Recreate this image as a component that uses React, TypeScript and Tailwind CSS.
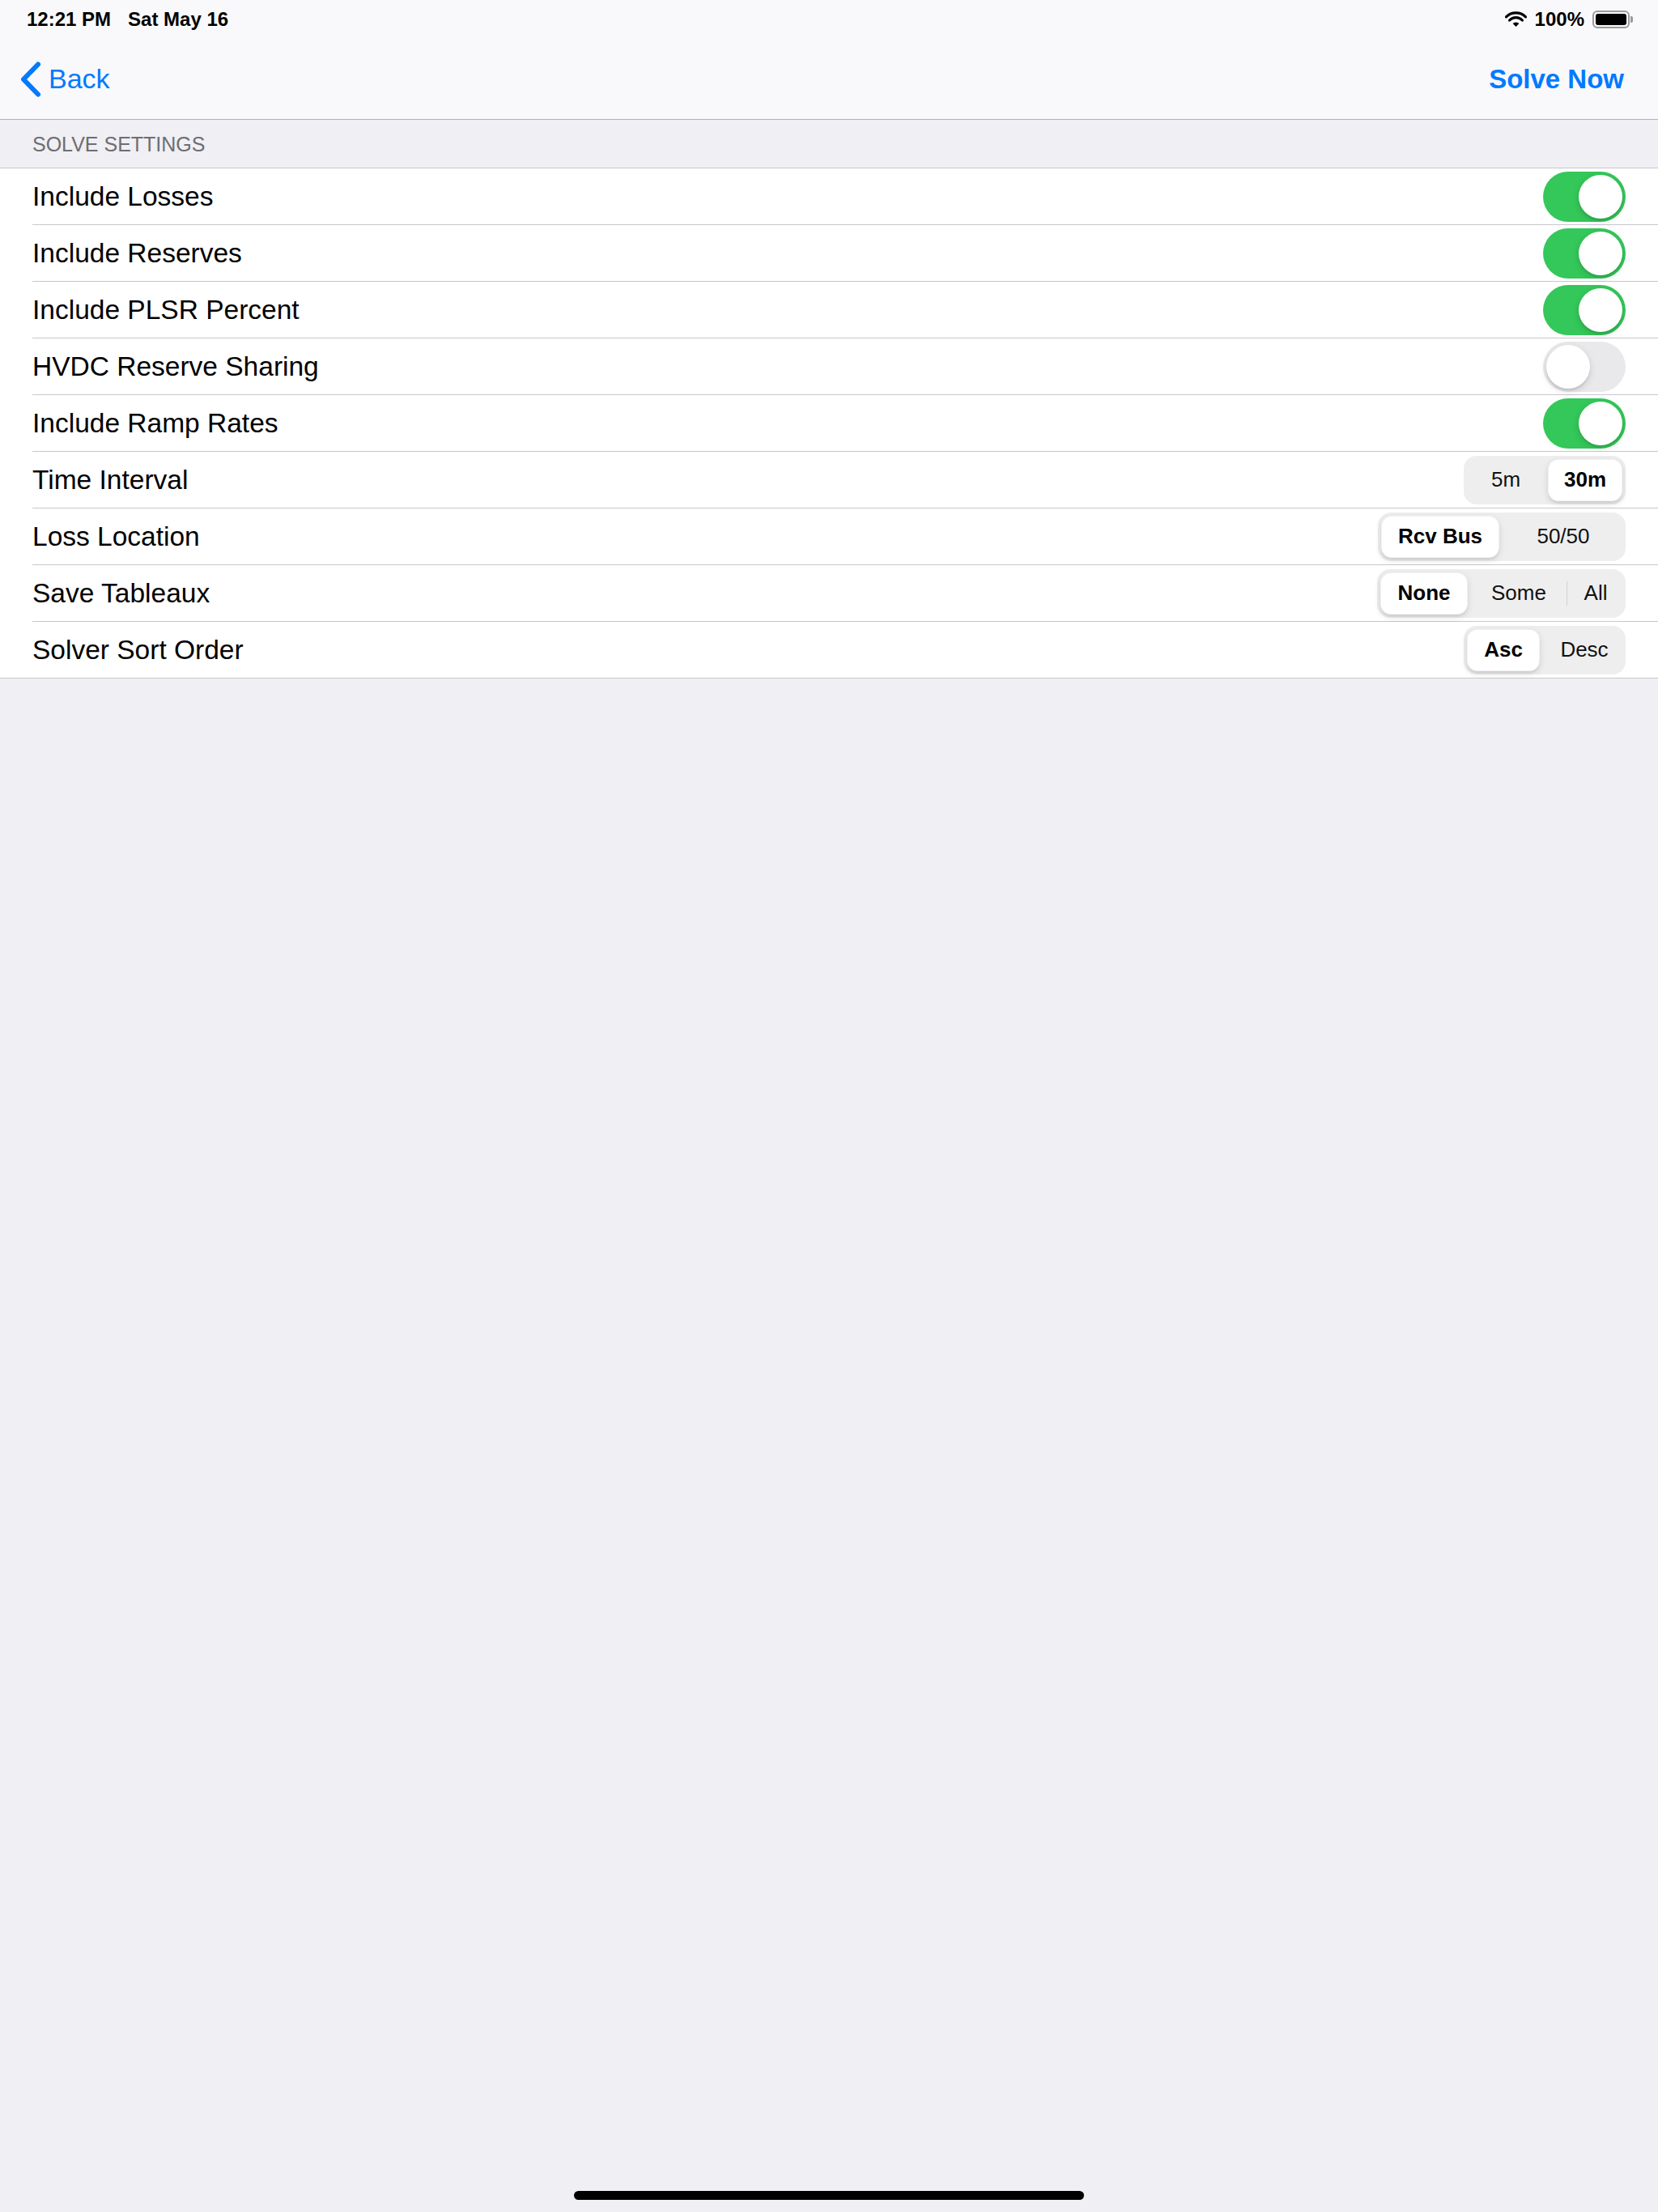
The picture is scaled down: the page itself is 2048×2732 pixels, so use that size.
import React from 'react';

type Segment = { label: string; width: string; selected?: boolean; divider?: boolean };

interface SettingRow {
  label: string;
  kind: 'toggle' | 'segment';
  on?: boolean;
  segments?: Segment[];
}

const rows: SettingRow[] = [
  { label: 'Include Losses', kind: 'toggle', on: true },
  { label: 'Include Reserves', kind: 'toggle', on: true },
  { label: 'Include PLSR Percent', kind: 'toggle', on: true },
  { label: 'HVDC Reserve Sharing', kind: 'toggle', on: false },
  { label: 'Include Ramp Rates', kind: 'toggle', on: true },
  {
    label: 'Time Interval',
    kind: 'segment',
    segments: [
      { label: '5m', width: 'w-[100px] pr-[4px]' },
      { label: '30m', width: 'w-[92px]', selected: true },
    ],
  },
  {
    label: 'Loss Location',
    kind: 'segment',
    segments: [
      { label: 'Rcv Bus', width: 'w-[146px]', selected: true },
      { label: '50/50', width: 'w-[152px] pl-[6px]' },
    ],
  },
  {
    label: 'Save Tableaux',
    kind: 'segment',
    segments: [
      { label: 'None', width: 'w-[108px]', selected: true },
      { label: 'Some', width: 'w-[122px] pl-[4px]' },
      { label: 'All', width: 'w-[68px] pl-[2px]', divider: true },
    ],
  },
  {
    label: 'Solver Sort Order',
    kind: 'segment',
    segments: [
      { label: 'Asc', width: 'w-[90px]', selected: true },
      { label: 'Desc', width: 'w-[102px] pl-[8px]' },
    ],
  },
];

const Toggle: React.FC<{ on: boolean }> = ({ on }) => (
  <div
    className={
      on
        ? 'w-[102px] h-[62px] rounded-full bg-[#34c759] p-[4px] flex justify-end'
        : 'w-[102px] h-[62px] rounded-full bg-[#e9e9eb] p-[4px] flex justify-start'
    }
  >
    <div className="w-[54px] h-[54px] rounded-full bg-white shadow-[0_3px_8px_rgba(0,0,0,0.15),0_3px_1px_rgba(0,0,0,0.06)]" />
  </div>
);

const SegmentedControl: React.FC<{ segments: Segment[] }> = ({ segments }) => (
  <div className="h-[60px] rounded-[16px] bg-[#eeeeef] p-[4px] flex items-stretch">
    {segments.map((seg) => (
      <React.Fragment key={seg.label}>
        {seg.divider && <div className="w-px h-[30px] self-center bg-[#d1d1d6]" />}
        <div
          className={
            seg.selected
              ? `${seg.width} flex items-center justify-center rounded-[13px] bg-white border border-black/5 shadow-[0_3px_8px_rgba(0,0,0,0.12),0_3px_1px_rgba(0,0,0,0.04)] text-[26px] font-semibold text-black`
              : `${seg.width} flex items-center justify-center text-[26px] text-[#111]`
          }
        >
          {seg.label}
        </div>
      </React.Fragment>
    ))}
  </div>
);

const WifiIcon = () => (
  <svg width="27" height="20" viewBox="0 0 27 20">
    <path d="M1.5 6.8 A17 17 0 0 1 25.5 6.8" stroke="black" strokeWidth="3.2" fill="none" strokeLinecap="round" />
    <path d="M5.6 11 A11 11 0 0 1 21.4 11" stroke="black" strokeWidth="3.2" fill="none" strokeLinecap="round" />
    <path d="M13.5 19 L9.6 15 A5.6 5.6 0 0 1 17.4 15 Z" fill="black" />
  </svg>
);

const Battery = () => (
  <div className="flex items-center">
    <div className="w-[46px] h-[22px] rounded-[6px] border-2 border-[#9a9a9e] p-[2px]">
      <div className="w-full h-full rounded-[3px] bg-black" />
    </div>
    <div className="w-[3px] h-[8px] rounded-r-[2px] bg-[#9a9a9e] ml-[1px]" />
  </div>
);

export default function App() {
  return (
    <div className="h-[2732px] w-full bg-[#efeff4] flex flex-col font-['Liberation_Sans',Arial,sans-serif] text-black">
      <div className="bg-[#f9f9fb] border-b border-[#b2b2b2]">
        <div className="h-[48px] flex items-center justify-between pl-[33px] pr-[31px] text-[24px] font-semibold">
          <div className="flex items-center gap-[21px]">
            <span>12:21 PM</span>
            <span>Sat May 16</span>
          </div>
          <div className="flex items-center gap-[10px]">
            <WifiIcon />
            <span>100%</span>
            <Battery />
          </div>
        </div>
        <div className="h-[99px] flex items-center justify-between pl-[25px] pr-[42px] text-[34px] text-[#007aff]">
          <div className="flex items-center gap-[9px]">
            <svg width="26" height="44" viewBox="0 0 26 44">
              <path d="M22 3.5 L4 22 L22 40.5" stroke="#007aff" strokeWidth="6" fill="none" strokeLinecap="round" strokeLinejoin="round" />
            </svg>
            <span>Back</span>
          </div>
          <span className="font-semibold text-[33px]">Solve Now</span>
        </div>
      </div>

      <div className="h-[59px] flex items-center pl-[40px] pt-[2px] text-[25px] text-[#6d6d72]">SOLVE SETTINGS</div>

      <div className="bg-white border-y border-[#c8c7cc]">
        {rows.map((row, i) => {
          const last = i === rows.length - 1;
          return (
            <div key={row.label} className={last ? 'h-[69px] flex pl-[40px]' : 'h-[70px] flex pl-[40px]'}>
              <div
                className={
                  last
                    ? 'flex-1 flex items-center justify-between pr-[40px]'
                    : 'flex-1 flex items-center justify-between pr-[40px] border-b border-[#c8c7cc]'
                }
              >
                <span className="text-[33.5px] pt-[1px]">{row.label}</span>
                {row.kind === 'toggle' ? (
                  <Toggle on={!!row.on} />
                ) : (
                  <SegmentedControl segments={row.segments || []} />
                )}
              </div>
            </div>
          );
        })}
      </div>

      <div className="flex-1 flex items-end justify-center pb-[15px]">
        <div className="w-[630px] h-[11px] rounded-full bg-black" />
      </div>
    </div>
  );
}
